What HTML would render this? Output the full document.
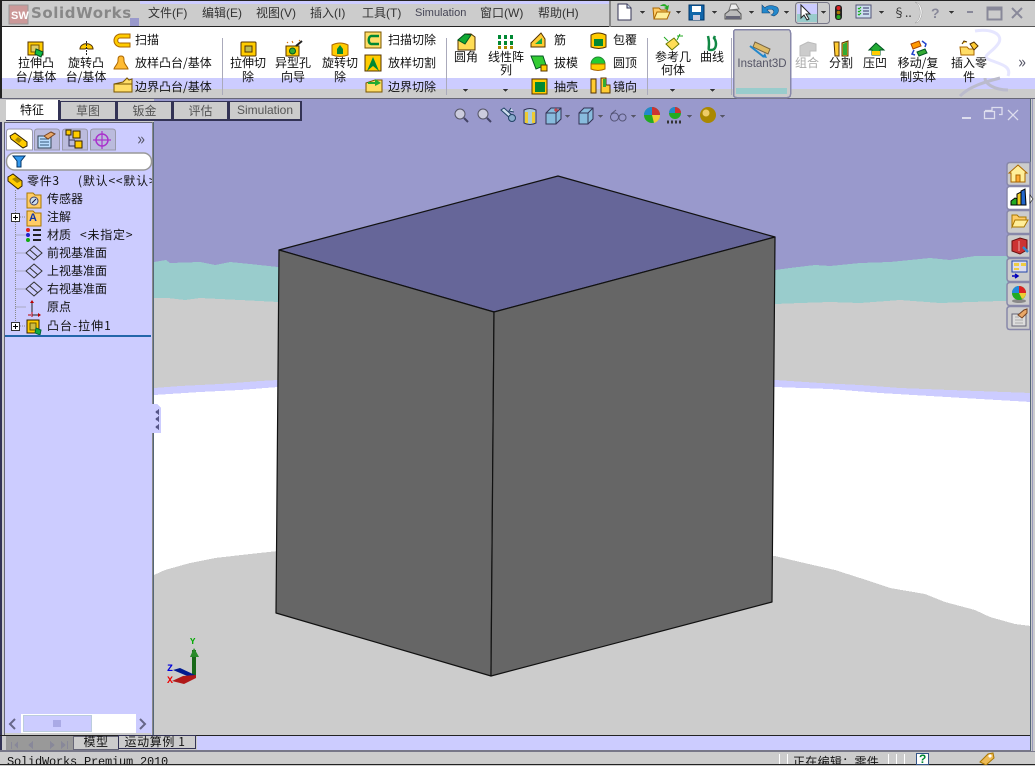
<!DOCTYPE html>
<html><head><meta charset="utf-8"><style>
html,body{margin:0;padding:0}
body{width:1035px;height:765px;overflow:hidden;position:relative;background:#ccc;font:12px/14px "WenQuanYi Zen Hei","Noto Sans CJK SC",sans-serif;color:#222}
div{position:absolute}
.t{position:absolute;white-space:nowrap;height:14px}
.c{position:absolute;width:80px;text-align:center;white-space:nowrap;height:14px}
.m{color:#333;font-family:"Liberation Sans","WenQuanYi Zen Hei",sans-serif}
.r{color:#111}
.tab{top:101px;height:17px;background:#ccc;border:1px solid #335;border-width:1px 2px 2px 1px;text-align:center;color:#555;line-height:17px}
svg{position:absolute;left:0;top:0}
</style></head><body>
<svg width="1035" height="765" viewBox="0 0 1035 765" shape-rendering="crispEdges">
<!-- title bar -->
<rect x="0" y="0" width="1035" height="27" fill="#ccc"/>
<rect x="0" y="0" width="1035" height="1" fill="#222"/>
<rect x="140" y="1" width="470" height="3" fill="#ccf"/>
<rect x="130" y="18" width="9" height="8" fill="#99c"/>
<rect x="0" y="26" width="610" height="1" fill="#222"/>
<rect x="610" y="26" width="425" height="1" fill="#555"/>
<rect x="609" y="1" width="2" height="26" fill="#888"/>
<!-- ribbon -->
<rect x="2" y="27" width="1033" height="51" fill="#fff"/>
<rect x="2" y="78" width="1033" height="11" fill="#ccf"/>
<rect x="2" y="89" width="1033" height="10" fill="#ccc"/>
<rect x="0" y="0" width="2" height="100" fill="#222"/>
<rect x="0" y="98" width="1035" height="1" fill="#667"/>
<g fill="none" stroke="#e6e6ff" stroke-width="3" shape-rendering="auto"><path d="M975 31C990 28 1005 34 998 44S980 56 990 60 1012 66 1008 76"/><path d="M1000 78C985 82 970 86 960 96" stroke="#bbc"/><path d="M985 78C985 84 995 90 1008 90" stroke="#bbc"/></g>
<g fill="#aab"><rect x="222" y="38" width="1" height="57"/><rect x="446" y="38" width="1" height="57"/><rect x="647" y="38" width="1" height="57"/><rect x="731" y="38" width="1" height="57"/></g>
<rect x="733.500" y="29.500" width="57" height="68" rx="3" fill="#ccc" stroke="#88a" stroke-width="1.500"/>
<rect x="736" y="88" width="51" height="6" fill="#9cc"/>
<!-- viewport -->
<rect x="154" y="99" width="877" height="640" fill="#99c"/>
<polygon fill="#9cc" points="154,262 166,260 170,263 200,262 215,265 230,262 250,264 278,267 775,270 790,268 815,265 830,266 860,263 890,262 930,258 950,260 975,256 1005,256 1031,255 1031,310 154,310"/>
<polygon fill="#ccc" points="154,298 168,298 185,300 200,298 240,300 278,302 775,304 800,303 830,302 860,303 900,300 940,303 1031,300 1031,395 154,395"/>
<polygon fill="#ccf" points="154,388 180,386 220,384 260,381 278,380 775,380 820,383 860,385 900,388 950,390 1031,393 1031,410 154,410"/>
<polygon fill="#fff" points="154,395 200,392 240,390 278,387 775,387 830,389 880,393 930,396 980,399 1031,402 1031,626 1015,624 990,617 975,610 945,602 925,594 890,588 860,578 835,570 800,562 775,556 278,551 250,554 215,558 190,563 165,570 154,575"/>
<polygon fill="#ccc" points="154,575 165,570 190,563 215,558 250,554 278,551 775,556 800,562 835,570 860,578 890,588 925,594 945,602 975,610 990,617 1015,624 1031,626 1031,739 154,739"/>
<g shape-rendering="auto" stroke="#111" stroke-width="1.200" stroke-linejoin="round">
<polygon fill="#669" points="558,176 775,237 494,312 279,250"/>
<polygon fill="#666" points="279,250 494,312 491,676 276,613"/>
<polygon fill="#666" points="494,312 775,237 772,602 491,676"/>
</g>
<!-- triad -->
<g shape-rendering="auto">
<rect x="192" y="650" width="4" height="27" fill="#186818"/><polygon points="190,657 194,648 199,657" fill="#2a8a2a"/>
<polygon points="173,670 180,668 195,675 192,678" fill="#001a90"/>
<polygon points="172,681 183,676 196,675 196,678 184,684" fill="#b01818"/>
</g>
<!-- left panel -->
<rect x="0" y="99" width="5" height="651" fill="#ccc"/><rect x="0" y="122" width="2" height="630" fill="#335"/><rect x="4" y="122" width="1" height="614" fill="#667"/>
<rect x="5" y="122" width="147" height="614" fill="#ccf"/>
<rect x="5" y="122" width="147" height="1" fill="#667"/>
<rect x="152" y="122" width="2" height="614" fill="#888"/><rect x="153" y="122" width="1" height="614" fill="#567"/>
<polygon fill="#ccf" points="152,404 157,404 161,408 161,433 152,433"/>
<g fill="#558"><polygon points="159,409 155,412 159,415"/><polygon points="159,416 155,419 159,422"/><polygon points="159,424 155,427 159,430"/></g>
<!-- panel tabs -->
<g fill="#ccf" stroke="#99a" shape-rendering="auto"><path d="M6.500 150V132q0-3 3-3h20q3 0 3 3v18z" fill="#fff"/><path d="M34.500 150V132q0-3 3-3h19q3 0 3 3v18z" fill="#bbd"/><path d="M62.500 150V132q0-3 3-3h19q3 0 3 3v18z" fill="#bbd"/><path d="M90.500 150V132q0-3 3-3h19q3 0 3 3v18z" fill="#bbd"/></g>
<g shape-rendering="auto">
<path d="M10 136l5-3 12 9 0 4-4 2-12-9z" fill="#fc0" stroke="#320"/><path d="M15 140l3-3 4 3-3 3z" fill="#a80"/>
<rect x="38" y="136" width="13" height="12" fill="#bdf" stroke="#345"/><path d="M40 139h9M40 142h9M40 145h9" stroke="#357"/><path d="M44 136l7-4 4 2-7 5z" fill="#e9a868" stroke="#742"/>
<path d="M69 133v13h6M69 140h6" stroke="#335" fill="none"/><rect x="73" y="131" width="7" height="7" fill="#fc0" stroke="#320"/><rect x="75" y="141" width="7" height="7" fill="#fc0" stroke="#320"/><rect x="66" y="130" width="5" height="5" fill="#fc0" stroke="#320"/>
<circle cx="102" cy="140" r="6" fill="none" stroke="#a3c" stroke-width="1.500"/><path d="M102 131v18M93 140h18" stroke="#a3c" stroke-width="1.200"/>
</g>
<!-- filter -->
<rect x="6.500" y="153" width="145" height="17" rx="8" fill="#fff" stroke="#999" stroke-width="1.500" shape-rendering="auto"/>
<path d="M13 156h12l-4 5v6h-4v-6z" fill="#39e" stroke="#036" shape-rendering="auto"/>
<!-- tree lines -->
<g stroke="#888" stroke-dasharray="1 1" fill="none"><path d="M15.500 190V326M15.500 199H26M20 217H26M15.500 235H26M15.500 253H26M15.500 271H26M15.500 289H26M15.500 307H26M20 326H26"/></g>
<g fill="#fff" stroke="#333"><rect x="11.500" y="213.500" width="8" height="8"/><rect x="11.500" y="322.500" width="8" height="8"/></g>
<path d="M13 217.500h5M15.500 215v5M13 326.500h5M15.500 324v5" stroke="#000"/>
<g shape-rendering="auto">
<path d="M8 177l5-3 9 7 0 5-4 3-10-8z" fill="#fc0" stroke="#320"/><path d="M12 179l4-2 5 4-4 2z" fill="#a80"/>
<path d="M27 193h6l2 2h6v13h-14z" fill="#fc6" stroke="#a70"/><circle cx="34" cy="201" r="4" fill="#cde" stroke="#446"/><path d="M32 203l4-4" stroke="#114"/>
<path d="M27 211h6l2 2h6v13h-14z" fill="#fc6" stroke="#a70"/>
<circle cx="28" cy="230" r="2" fill="#d22"/><circle cx="28" cy="235" r="2" fill="#22c"/><circle cx="28" cy="240" r="2" fill="#1a1"/><path d="M33 230h8M33 235h8M33 240h8" stroke="#222" stroke-width="2"/>
<g fill="none" stroke="#333"><path d="M34 246l8 7-8 7-8-7zM30 250l8 7"/><path d="M34 264l8 7-8 7-8-7zM30 268l8 7"/><path d="M34 282l8 7-8 7-8-7zM30 286l8 7"/></g>
<path d="M32 301v14h8" fill="none" stroke="#222"/><path d="M32 300l-2 3h4zM41 315l-3-2v4z" fill="#b00"/><path d="M28 315h3M32 312v5" stroke="#b00"/>
<rect x="27" y="320" width="12" height="13" fill="#fc0" stroke="#320"/><rect x="30" y="323" width="6" height="7" fill="#cb4" stroke="#650"/><path d="M36 328l5 2-1 5-5-2z" fill="#1a4" stroke="#063"/>
</g>
<rect x="5" y="335" width="146" height="2" fill="#26a"/>
<!-- scrollbar -->
<rect x="5" y="714" width="146" height="19" fill="#fff"/>
<rect x="5" y="714" width="16" height="19" fill="#ccf"/><rect x="136" y="714" width="15" height="19" fill="#ccf"/>
<rect x="23.500" y="715.500" width="68" height="16" fill="#ccf" stroke="#bcd"/>
<path d="M54 720v7M56 720v7M58 720v7M60 720v7" stroke="#88c"/>
<path d="M15 719l-5 5 5 5M140 719l5 5-5 5" fill="none" stroke="#668" stroke-width="2" shape-rendering="auto"/>
<rect x="5" y="733" width="146" height="2" fill="#ccc"/>
<!-- bottom tabs -->
<rect x="0" y="735" width="1031" height="1" fill="#222"/>
<rect x="197" y="736" width="834" height="14" fill="#ccf"/>
<rect x="6" y="736" width="67" height="15" fill="#999"/>
<g fill="#889"><rect x="11" y="742" width="1" height="7"/><polygon points="14,745 18,741 18,749"/><polygon points="28,745 33,741 33,749"/><polygon points="50,741 55,745 50,749"/><polygon points="61,741 66,745 61,749"/><rect x="67" y="741" width="1" height="8"/></g>
<rect x="73.500" y="736.500" width="45" height="13" fill="#ccc" stroke="#667"/><rect x="118.500" y="735.500" width="77" height="13" fill="#ccc" stroke="#335"/>
<rect x="0" y="750" width="1035" height="2" fill="#778"/>
<rect x="0" y="752" width="1035" height="12" fill="#ccc"/><rect x="0" y="764" width="1035" height="1" fill="#222"/>
<g fill="#fff"><rect x="779" y="754" width="1" height="10"/><rect x="787" y="754" width="1" height="10"/><rect x="888" y="754" width="1" height="10"/><rect x="896" y="754" width="1" height="10"/><rect x="904" y="754" width="1" height="10"/></g>
<rect x="916.500" y="753.500" width="12" height="11" fill="#fff" stroke="#358"/>
<path d="M980 762l8-8 5-1 1 5-8 7z" fill="#eb5" stroke="#a70" shape-rendering="auto"/><circle cx="990" cy="756" r="1.500" fill="#fff"/>
<!-- right border -->
<rect x="1030" y="99" width="1" height="652" fill="#567"/><rect x="1031" y="99" width="4" height="652" fill="#ccc"/><rect x="1032" y="99" width="1" height="652" fill="#99b"/>
<!-- task pane -->
<g fill="#ccc" stroke="#88a" stroke-width="1.500" shape-rendering="auto">
<path d="M1030 162.500h-20q-3 0-3 3v17q0 3 3 3h20z"/><path d="M1030 186.500h-20q-3 0-3 3v17q0 3 3 3h20z" fill="#fff"/><path d="M1030 210.500h-20q-3 0-3 3v17q0 3 3 3h20z"/><path d="M1030 234.500h-20q-3 0-3 3v17q0 3 3 3h20z"/><path d="M1030 258.500h-20q-3 0-3 3v17q0 3 3 3h20z"/><path d="M1030 282.500h-20q-3 0-3 3v17q0 3 3 3h20z"/><path d="M1030 306.500h-20q-3 0-3 3v17q0 3 3 3h20z"/>
</g>
<g shape-rendering="auto">
<path d="M1018 165l9 8h-2v9h-14v-9h-2z" fill="#fe9" stroke="#a60"/><rect x="1016" y="175" width="4" height="7" fill="#fa3" stroke="#a60"/>
<path d="M1011 201l4-3 3 1 0 6h-7z" fill="#2a2" stroke="#000"/><path d="M1017 205v-11l4-2v13z" fill="#ec2" stroke="#000"/><path d="M1021 205v-14l4-2 1 16z" fill="#26c" stroke="#000"/>
<polygon points="1030,195 1033,199 1030,203" fill="#fff" stroke="#333" stroke-width=".7"/>
<path d="M1012 227v-12h5l2 2h7v3h-10z" fill="#fc6" stroke="#a70"/><path d="M1012 227l3-7h13l-4 7z" fill="#fe9" stroke="#a70"/>
<path d="M1012 241l8-3 7 2v10l-7 4-8-3z" fill="#c33" stroke="#611"/><path d="M1019 241v10" stroke="#eaa"/><path d="M1023 247l5 5" stroke="#38c" stroke-width="2.500"/>
<rect x="1012" y="261" width="15" height="11" fill="#dde" stroke="#24a"/><rect x="1014" y="263" width="5" height="3" fill="#ec4"/><rect x="1021" y="263" width="5" height="3" fill="#ec4"/><rect x="1014" y="268" width="5" height="2" fill="#ec4"/><path d="M1012 276h5M1015 274l3 2-3 2" stroke="#00b" stroke-width="1.500" fill="none"/>
<ellipse cx="1019" cy="301" rx="7" ry="2" fill="#888"/><circle cx="1019" cy="293" r="7" fill="#2a2"/><path d="M1019 293V286a7 7 0 0 1 7 7z" fill="#d22"/><path d="M1019 293V286a7 7 0 0 0-7 7z" fill="#28d"/><path d="M1019 293h7a7 7 0 0 1-4 6z" fill="#ec3"/>
<rect x="1012" y="314" width="14" height="12" fill="#ddd" stroke="#667"/><path d="M1015 317h4M1015 320h8M1015 323h8" stroke="#aaa"/><path d="M1018 315l6-5 3-1v4l-5 5z" fill="#e9a868" stroke="#742"/>
</g>
<!-- logo -->
<g shape-rendering="auto"><path d="M9 5h19v19h-19z" fill="#c99" stroke="#999"/><text x="11" y="19" font-family="Liberation Sans" font-weight="bold" font-size="11" fill="#fff">SW</text></g>
<!-- title toolbar icons -->
<g shape-rendering="auto">
<path d="M618 4h9l4 4v12h-13z" fill="#fff" stroke="#335"/><path d="M627 4v4h4" fill="#cde" stroke="#335"/>
<path d="M654 19l-1-11h6l2 2h6v9z" fill="#fc6" stroke="#a60"/><path d="M654 19l3-7h13l-3 7z" fill="#fe9" stroke="#a60"/><path d="M660 6c3-3 6-2 7 0l2-1-1 5-4-2 2-1c-1-1-3-1-6-1z" fill="#2a2"/>
<rect x="689" y="5" width="15" height="15" fill="#16a" stroke="#036"/><rect x="692" y="6" width="9" height="6" fill="#fff"/><rect x="693" y="15" width="7" height="5" fill="#ccd"/>
<path d="M725 14l5-4h7l4 4v5h-16z" fill="#bbb" stroke="#555"/><path d="M729 10l2-6h5l3 5z" fill="#eee" stroke="#777"/><rect x="726" y="16" width="14" height="3" fill="#667"/>
<path d="M774 16c6-3 6-9 0-10-4-1-8 0-9 2l-3-3v8h8l-3-3c2-1 5-1 6 0 2 2 0 4-2 5z" fill="#28c" stroke="#147" stroke-width=".6"/>
<rect x="795.500" y="2.500" width="34" height="21" rx="3" fill="#ccc" stroke="#778"/><rect x="797" y="4" width="21" height="10" fill="#ccf"/><rect x="797" y="14" width="21" height="8" fill="#9cc"/><path d="M817.500 3v20" stroke="#778"/>
<path d="M801 5v13l3-3 3 5 2-1-3-5h4z" fill="#fff" stroke="#222"/>
<rect x="835" y="5" width="7" height="15" rx="3" fill="#222"/><circle cx="838.500" cy="8" r="2" fill="#d22"/><circle cx="838.500" cy="12.500" r="1.800" fill="#a70"/><circle cx="838.500" cy="17" r="2" fill="#2a2"/>
<rect x="856" y="5" width="15" height="13" fill="#cde" stroke="#557"/><path d="M863 8h6M863 11h6M863 14h6" stroke="#336"/><path d="M858 8l1 1 2-2M858 11l1 1 2-2M858 14l1 1 2-2" stroke="#1a1" fill="none"/>
<path d="M915 2c6 3 8 16 0 21 4 0 7-6 7-11s-3-9-7-10z" fill="#fff" stroke="#999" stroke-width=".5"/>
<path d="M967 12h6M987.500 7.500h14v12h-14zM987.500 9.500h14M1012 8l10 10M1022 8l-10 10" fill="none" stroke="#889" stroke-width="2"/>
<!-- ribbon icons -->
<rect x="28" y="42" width="15" height="13" fill="#fc0" stroke="#530"/><rect x="31" y="45" width="8" height="7" fill="#dc6" stroke="#750"/><path d="M36 49l7 3-2 5-6-3z" fill="#1b4" stroke="#052"/>
<path d="M80 49a6 5 0 0 1 13 0h-5a2 2 0 0 0-3 0z" fill="#fc0" stroke="#530"/><path d="M86.500 41v15" stroke="#222" stroke-dasharray="2 1"/>
<path d="M130 34h-10c-8 1-8 12 0 13h10v-4h-10c-3 0-3-5 0-5h10z" fill="#fc0" stroke="#a60"/>
<path d="M121 56c3 0 3 2 3 5s4 6 4 8h-14c0-2 4-5 4-8s0-5 3-5z" fill="#fb3" stroke="#a60"/>
<path d="M114 84l9-2 4-4 2 2 3-1v13h-18z" fill="#fd6" stroke="#750"/><path d="M114 84h18" stroke="#750"/>
<rect x="241" y="42" width="15" height="14" rx="1" fill="#fc0" stroke="#530"/><rect x="245" y="46" width="7" height="6" fill="#bb5" stroke="#530"/>
<rect x="286" y="46" width="13" height="10" fill="#fc0" stroke="#530"/><circle cx="292.500" cy="51" r="3" fill="#3a3" stroke="#052"/><path d="M296 46l6-5" stroke="#222" stroke-width="2"/><path d="M287 42l1 1M292 41l1 2M299 40l1 1" stroke="#c60"/>
<path d="M332 45q8-4 16 0v10q-8 3-16 0z" fill="#fc0" stroke="#a60"/><path d="M337 54v-5l3-4 3 4v5z" fill="#083"/>
<rect x="365" y="32" width="16" height="16" fill="#fd6" stroke="#750"/><path d="M379 36h-8c-3 1-3 7 0 8h8" fill="none" stroke="#083" stroke-width="2.500"/>
<rect x="365" y="55" width="16" height="16" fill="#fc0" stroke="#530"/><path d="M367 71l6-14 6 14-6-5z" fill="#083"/>
<path d="M366 83l9-3h7v12h-16z" fill="#fd6" stroke="#750"/><path d="M368 82h7v-3l6 4-6 3v-2h-7z" fill="#2a3"/>
<path d="M458 40l7-6h6l4 3v13h-17z" fill="#fd5" stroke="#530"/><path d="M458 40l7-6 6 1-6 9z" fill="#1a3" stroke="#052"/>
<g fill="#083"><rect x="498" y="35" width="3" height="4"/><rect x="504" y="35" width="3" height="4"/><rect x="510" y="35" width="3" height="4"/><rect x="498" y="41" width="3" height="4"/><rect x="504" y="41" width="3" height="4"/><rect x="510" y="41" width="3" height="4"/><rect x="498" y="46" width="3" height="3" fill="#a80"/><rect x="504" y="46" width="3" height="3" fill="#a80"/><rect x="510" y="46" width="3" height="3" fill="#a80"/></g>
<path d="M531 43l10-10 4 6v8h-14z" fill="#fc3" stroke="#530"/><path d="M535 44l7-6v6z" fill="#1a4"/>
<path d="M531 56h12l3 9-10 4z" fill="#3c3" stroke="#052"/><rect x="541" y="65" width="6" height="6" fill="#fc0" stroke="#530"/>
<rect x="532" y="79" width="15" height="15" fill="#fc0" stroke="#530"/><rect x="535" y="82" width="10" height="10" fill="#083"/>
<path d="M591 35q7-4 15 0v12q-7 3-15 0z" fill="#fc0" stroke="#530"/><rect x="594" y="39" width="9" height="7" fill="#083"/>
<path d="M591 64a7 7 0 0 1 14 0z" fill="#2c3" stroke="#283"/><path d="M591 64h14v5q-7 3-14 0z" fill="#fc0" stroke="#a60"/>
<path d="M591 79h5v14h-5zM601 78h5v7h4v8h-9z" fill="#fc3" stroke="#530"/><rect x="603" y="79" width="3" height="8" fill="#3a3"/>
<path d="M666 44l8-6 5 6-7 6z" fill="#fd5" stroke="#670"/><path d="M664 37l4 4M680 34l-3 6M677 36l6 0" stroke="#2a2"/>
<path d="M708 36c3 12-2 14 3 14 6 0 6-8 3-12l1-2" fill="none" stroke="#184" stroke-width="2.500"/>
<path d="M755 42l15 7-2 5-15-7z" fill="#db6" stroke="#764"/><path d="M750 46l14 11" stroke="#28c" stroke-width="2"/><path d="M767 58l-5-1 3-4z" fill="#28c"/>
<path d="M800 46l8-4 8 2v7h-6v5h-10z" fill="#ccc" stroke="#bbb"/>
<path d="M834 42h5v14l-4 0zM842 43l6-2v15h-6z" fill="#fc3" stroke="#530"/><path d="M843 44l4-2v13h-4z" fill="#3a3"/>
<path d="M869 50l7-7 8 7h-4v5h-8v-5z" fill="#2a3" stroke="#052"/><path d="M872 51h8v4h-8z" fill="#fc0"/>
<path d="M911 44l8-3 2 5-8 3z" fill="#f90" stroke="#a40"/><path d="M917 52l8-3 2 4-8 3z" fill="#3a3" stroke="#052"/><path d="M922 41l4 3-1 3M914 50l-2 4 3 1" fill="none" stroke="#24c" stroke-width="1.500"/>
<path d="M961 55l-1-8h7l2 2h5v6z" fill="#fd6" stroke="#a60"/><path d="M970 44l4-2 4 4-4 4zM962 44l2-3 3 1" fill="#fc3" stroke="#530"/>
<!-- viewport icons -->
<g fill="#ccd" stroke="#556"><circle cx="460" cy="114" r="5"/><circle cx="483" cy="114" r="5"/></g><path d="M464 118l4 4M487 118l4 4" stroke="#446" stroke-width="2"/>
<path d="M501 110l10 9 3-2-10-9zM514 112l-5-1 2-3" fill="#cde" stroke="#246"/><circle cx="512" cy="118" r="3.500" fill="#8ac" stroke="#246"/>
<path d="M524 110q6-3 12 0v13q-6 3-12 0z" fill="#acd" stroke="#335"/><rect x="525" y="112" width="3" height="11" fill="#ec3"/><rect x="532" y="112" width="3" height="11" fill="#ec3"/>
<path d="M546 113l5-5h10v11l-5 5h-10z" fill="#8bd" stroke="#335"/><path d="M546 113h10v11M556 113l5-5" fill="none" stroke="#335"/><path d="M554 110h5M556 112v-4" stroke="#c22"/>
<path d="M579 113l5-5h9v11l-5 5h-9z" fill="#8bd" stroke="#335"/><path d="M579 113h9v11M588 113l5-5" fill="none" stroke="#335"/>
<path d="M611 115a3 3 0 1 0 7 4 3 3 0 1 0-7-4zM619 117a3 3 0 1 0 7 1 3 3 0 1 0-7-1zM611 114l5-4" fill="none" stroke="#557"/>
<circle cx="652" cy="115" r="8" fill="#2a2"/><path d="M652 115V107a8 8 0 0 1 8 8z" fill="#c33"/><path d="M652 115V107a8 8 0 0 0-8 8z" fill="#28c"/><path d="M652 115h8a8 8 0 0 1-6 8z" fill="#ec3"/>
<circle cx="675" cy="113" r="6" fill="#2a2"/><path d="M675 113v-6a6 6 0 0 1 6 6z" fill="#c33"/><path d="M675 113v-6a6 6 0 0 0-6 6z" fill="#28c"/><path d="M667 122h16" stroke="#333" stroke-width="3" stroke-dasharray="2 2"/>
<circle cx="708" cy="115" r="8" fill="#a80"/><circle cx="706" cy="113" r="3.500" fill="#ec6"/>
<path d="M985 110.500h7v-3h10v7h-3M984.500 111.500h10v7h-10zM1008 110l10 10M1018 110l-10 10" fill="none" stroke="#dde" stroke-width="1.300"/>
<path d="M962 118h9" stroke="#dde" stroke-width="2"/>
</g>
<!-- small arrows -->
<g fill="#333"><polygon points="640,11 645,11 642.500,14"/><polygon points="676,11 681,11 678.500,14"/><polygon points="712,11 717,11 714.500,14"/><polygon points="749,11 754,11 751.500,14"/><polygon points="784,11 789,11 786.500,14"/><polygon points="821,11 826,11 823.500,14"/><polygon points="879,11 884,11 881.500,14"/><polygon points="949,11 954,11 951.500,14"/><polygon points="463,89 468,89 465.500,92"/><polygon points="503,89 508,89 505.500,92"/><polygon points="670,89 675,89 672.500,92"/><polygon points="710,89 715,89 712.500,92"/></g>
<g fill="#556"><polygon points="565,115 570,115 567.500,118"/><polygon points="598,115 603,115 600.500,118"/><polygon points="631,115 636,115 633.500,118"/><polygon points="687,115 692,115 689.500,118"/><polygon points="720,115 725,115 722.500,118"/></g>
</svg>

<div class="t" style="left:31px;top:4px;font:bold 15px/18px 'DejaVu Sans',sans-serif;color:#888;letter-spacing:.6px">SolidWorks</div>
<span class="t m" style="left:148px;top:6px">文件(F)</span><span class="t m" style="left:202px;top:6px">编辑(E)</span><span class="t m" style="left:256px;top:6px">视图(V)</span><span class="t m" style="left:310px;top:6px">插入(I)</span><span class="t m" style="left:362px;top:6px">工具(T)</span><span class="t m" style="left:415px;top:6px;font-size:11px;color:#445">Simulation</span><span class="t m" style="left:480px;top:6px">窗口(W)</span><span class="t m" style="left:538px;top:6px">帮助(H)</span>
<span class="t" style="left:893px;top:6px;color:#333">§..</span><span class="t" style="left:931px;top:5px;color:#889;font:bold 14px 'Liberation Sans'">?</span>

<span class="c r" style="left:-4px;top:56px">拉伸凸</span><span class="c r" style="left:-4px;top:70px">台/基体</span>
<span class="c r" style="left:46px;top:56px">旋转凸</span><span class="c r" style="left:46px;top:70px">台/基体</span>
<span class="t r" style="left:135px;top:33px">扫描</span><span class="t r" style="left:135px;top:56px">放样凸台/基体</span><span class="t r" style="left:135px;top:80px">边界凸台/基体</span>
<span class="c r" style="left:208px;top:56px">拉伸切</span><span class="c r" style="left:208px;top:70px">除</span>
<span class="c r" style="left:253px;top:56px">异型孔</span><span class="c r" style="left:253px;top:70px">向导</span>
<span class="c r" style="left:300px;top:56px">旋转切</span><span class="c r" style="left:300px;top:70px">除</span>
<span class="t r" style="left:388px;top:33px">扫描切除</span><span class="t r" style="left:388px;top:56px">放样切割</span><span class="t r" style="left:388px;top:80px">边界切除</span>
<span class="c r" style="left:426px;top:50px">圆角</span>
<span class="c r" style="left:466px;top:50px">线性阵</span><span class="c r" style="left:466px;top:63px">列</span>
<span class="t r" style="left:554px;top:33px">筋</span><span class="t r" style="left:554px;top:56px">拔模</span><span class="t r" style="left:554px;top:80px">抽壳</span>
<span class="t r" style="left:613px;top:33px">包覆</span><span class="t r" style="left:613px;top:56px">圆顶</span><span class="t r" style="left:613px;top:80px">镜向</span>
<span class="c r" style="left:633px;top:50px">参考几</span><span class="c r" style="left:633px;top:63px">何体</span>
<span class="c r" style="left:672px;top:50px">曲线</span>
<span class="c" style="left:722px;top:57px;font-family:'Liberation Sans',sans-serif;font-size:11.500px;color:#556">Instant3D</span>
<span class="c" style="left:767px;top:56px;color:#aaa">组合</span>
<span class="c r" style="left:801px;top:56px">分割</span>
<span class="c r" style="left:835px;top:56px">压凹</span>
<span class="c r" style="left:878px;top:56px">移动/复</span><span class="c r" style="left:878px;top:70px">制实体</span>
<span class="c r" style="left:929px;top:56px">插入零</span><span class="c r" style="left:929px;top:70px">件</span>
<span class="t" style="left:1018px;top:54px;color:#556;font-size:17px">»</span>

<div style="left:6px;top:100px;width:54px;height:21px;background:#fff;border-right:2px solid #335;border-bottom:1px solid #335;box-sizing:border-box;text-align:center;line-height:20px;color:#111">特征</div>
<div class="tab" style="left:60px;width:54px">草图</div><div class="tab" style="left:117px;width:53px">钣金</div><div class="tab" style="left:173px;width:53px">评估</div><div class="tab" style="left:229px;width:70px;font-family:'Liberation Sans',sans-serif">Simulation</div>

<span class="t" style="left:137px;top:131px;color:#556;font-size:17px">»</span>
<span class="t r" style="left:27px;top:174px;letter-spacing:.7px">零件3</span>
<div class="t r" style="left:78px;top:174px;width:74px;overflow:hidden;letter-spacing:.8px">(默认&lt;&lt;默认&gt;</div>
<span class="t r" style="left:47px;top:192px">传感器</span><span class="t r" style="left:47px;top:210px">注解</span><span class="t r" style="left:47px;top:228px">材质</span><span class="t r" style="left:80px;top:228px;letter-spacing:.8px">&lt;未指定&gt;</span><span class="t r" style="left:47px;top:246px">前视基准面</span><span class="t r" style="left:47px;top:264px">上视基准面</span><span class="t r" style="left:47px;top:282px">右视基准面</span><span class="t r" style="left:47px;top:300px">原点</span><span class="t r" style="left:47px;top:319px;letter-spacing:1px">凸台-拉伸1</span>
<span class="t" style="left:29px;top:211px;color:#13a;font:bold 11px/14px 'Liberation Sans'">A</span>

<span class="t" style="left:190px;top:637px;color:#0a0;font:bold 9px/10px 'Liberation Mono'">Y</span><span class="t" style="left:167px;top:664px;color:#00d;font:bold 10px/11px 'Liberation Mono'">Z</span><span class="t" style="left:167px;top:676px;color:#e00;font:bold 10px/11px 'Liberation Mono'">X</span>
<span class="c r" style="left:56px;top:735px;letter-spacing:.5px">模型</span><span class="c r" style="left:115px;top:735px;letter-spacing:.6px">运动算例 1</span>
<div class="t" style="left:7px;top:755px;height:9px;overflow:hidden;font:12px/14px 'Liberation Mono',monospace;letter-spacing:-.2px;color:#111">SolidWorks Premium 2010</div>
<div class="t r" style="left:793px;top:755px;height:9px;overflow:hidden;letter-spacing:.3px">正在编辑：零件</div>
<span class="t" style="left:919px;top:752px;color:#083;font:bold 12px/14px 'Liberation Sans'">?</span>
</body></html>
